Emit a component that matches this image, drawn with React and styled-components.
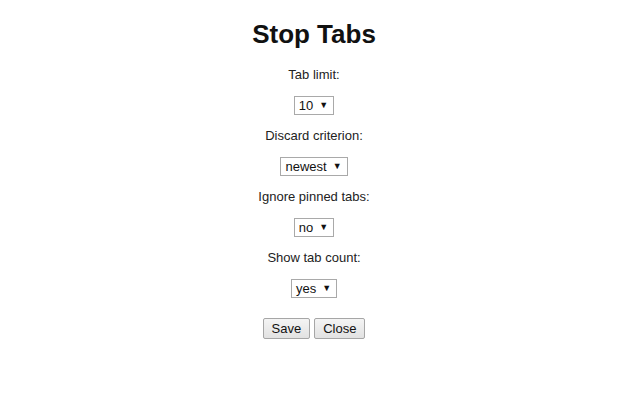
import React from "react";
import styled, { createGlobalStyle } from "styled-components";

const Global = createGlobalStyle`
  html, body { margin: 0; padding: 0; background: #fff; }
  body { font-family: "Liberation Sans", Arial, sans-serif; font-size: 13px; color: #222; }
`;

const Page = styled.div`
  display: flex;
  flex-direction: column;
  align-items: center;
  padding: 18px 12px 0 0;
`;

const Title = styled.h1`
  margin: 0 0 17px;
  font-size: 26px;
  font-weight: bold;
  line-height: 32px;
  color: #111;
`;

const Field = styled.div`
  display: flex;
  flex-direction: column;
  align-items: center;
  gap: 14px;
  margin-bottom: 13px;
`;

const Label = styled.label`
  line-height: 15px;
  color: #222;
`;

const SelectBox = styled.div`
  display: inline-flex;
  align-items: center;
  gap: 6px;
  height: 19px;
  box-sizing: border-box;
  padding: 0 5px 0 4px;
  border: 1px solid #a9a9a9;
  background: #fff;
  font-size: 13px;
  color: #111;
  line-height: 17px;
`;

const Arrow = styled.span`
  font-size: 9px;
  color: #111;
`;

const Buttons = styled.div`
  display: flex;
  gap: 4px;
  margin-top: 7px;
`;

const Button = styled.button`
  font-family: "Liberation Sans", Arial, sans-serif;
  font-size: 13px;
  color: #111;
  height: 21px;
  padding: 0 8px;
  border: 1px solid #a6a6a6;
  border-radius: 2px;
  background: linear-gradient(#f4f4f4, #e2e2e2);
`;

const fields = [
  ["Tab limit:", "10"],
  ["Discard criterion:", "newest"],
  ["Ignore pinned tabs:", "no"],
  ["Show tab count:", "yes"],
];

export default function App() {
  return (
    <>
      <Global />
      <Page>
        <Title>Stop Tabs</Title>
        {fields.map(([l, v]) => (
          <Field key={l}>
            <Label>{l}</Label>
            <SelectBox>
              {v}
              <Arrow>▼</Arrow>
            </SelectBox>
          </Field>
        ))}
        <Buttons>
          <Button>Save</Button>
          <Button>Close</Button>
        </Buttons>
      </Page>
    </>
  );
}
